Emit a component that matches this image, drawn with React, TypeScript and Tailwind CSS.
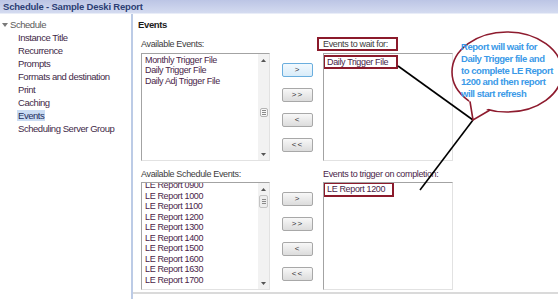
import React from "react";

const treeItems = [
  "Instance Title",
  "Recurrence",
  "Prompts",
  "Formats and destination",
  "Print",
  "Caching",
  "Events",
  "Scheduling Server Group",
];

const scheduleEvents = [
  "LE Report 0900",
  "LE Report 1000",
  "LE Report 1100",
  "LE Report 1200",
  "LE Report 1300",
  "LE Report 1400",
  "LE Report 1500",
  "LE Report 1600",
  "LE Report 1630",
  "LE Report 1700",
];

function Arrow({ up }: { up?: boolean }) {
  return (
    <div className="h-[12px] flex items-center justify-center">
      <svg width="5" height="3" viewBox="0 0 5 3">
        <path d={up ? "M0 3 L2.5 0 L5 3Z" : "M0 0 L2.5 3 L5 0Z"} fill="#555" />
      </svg>
    </div>
  );
}

function Grip() {
  return (
    <div className="w-[8px] h-[9px] border border-[#b4b4b4] rounded-[2px] bg-[#f8f8f8] flex flex-col items-center justify-center gap-[1px]">
      <div className="w-[4px] h-px bg-[#8a8a8a]" />
      <div className="w-[4px] h-px bg-[#8a8a8a]" />
      <div className="w-[4px] h-px bg-[#8a8a8a]" />
    </div>
  );
}

function ScrollBar({ thumb }: { thumb: "full" | "top" }) {
  return (
    <div className="w-[11px] bg-[#f2f2f2] flex flex-col">
      <Arrow up />
      <div className="flex-1 relative flex justify-center">
        {thumb === "top" ? (
          <div className="w-[9px] h-[13px] border border-[#c4c4c4] rounded-[2px] bg-[#ededed] flex items-center justify-center">
            <div className="flex flex-col gap-[1px]">
              <div className="w-[4px] h-px bg-[#8a8a8a]" />
              <div className="w-[4px] h-px bg-[#8a8a8a]" />
              <div className="w-[4px] h-px bg-[#8a8a8a]" />
            </div>
          </div>
        ) : (
          <div className="absolute top-[42px]">
            <Grip />
          </div>
        )}
      </div>
      <Arrow />
    </div>
  );
}

function ListBox({ children, scroll, width }: { children: React.ReactNode; scroll?: React.ReactNode; width: string }) {
  return (
    <div className={`${width} h-[108px] flex border border-[#a3a3a3] border-r-[#e2e2e2] border-b-[#e2e2e2] bg-white`}>
      <div className="flex-1 overflow-hidden">{children}</div>
      {scroll}
    </div>
  );
}

function MoveButtons({ focused }: { focused?: boolean }) {
  const base =
    "w-[31px] h-[14px] rounded-[2px] border flex items-center justify-center text-[8px] leading-none text-[#333] tracking-[1px]";
  const normal = "border-[#a8a8a8] bg-gradient-to-b from-[#f8f8f8] to-[#dcdcdc]";
  const focus = "border-[#6aaede] bg-gradient-to-b from-[#f2f9fe] to-[#d9ecf9]";
  return (
    <div className="flex flex-col gap-[11px]">
      <div className={`${base} ${focused ? focus : normal}`}>&gt;</div>
      <div className={`${base} ${normal}`}>&gt;&gt;</div>
      <div className={`${base} ${normal}`}>&lt;</div>
      <div className={`${base} ${normal}`}>&lt;&lt;</div>
    </div>
  );
}

export default function App() {
  return (
    <div className="w-[558px] h-[299px] relative overflow-hidden bg-white font-['Liberation_Sans',Arial,sans-serif] text-[9px] tracking-[-0.35px]">
      {/* title bar */}
      <div className="h-[14px] border-b border-[#e9edf8] bg-gradient-to-b from-[#bcc5e5] to-[#d4dbf0] pl-[3px] text-[9.5px] font-bold leading-[13px] text-[#2c3e74] tracking-[-0.2px]">
        Schedule - Sample Deski Report
      </div>

      <div className="flex h-[285px]">
        {/* left tree */}
        <div className="w-[133px] border-r-2 border-[#bccbe6] pt-[4px] leading-[13px] text-[9.5px] tracking-[-0.45px]">
          <div className="flex items-center pl-[2px] text-[#5a5a5a]">
            <svg width="6" height="4" viewBox="0 0 6 4" className="mr-[2px]">
              <path d="M0 0 L6 0 L3 4Z" fill="#7a7a7a" />
            </svg>
            Schedule
          </div>
          {treeItems.map((t) => (
            <div key={t} className="pl-[18px] text-[#3f2a48]">
              {t === "Events" ? (
                <span className="bg-[#cadcf3] text-[#1e2f5e] px-[1px] -ml-[1px]">{t}</span>
              ) : (
                t
              )}
            </div>
          ))}
        </div>

        {/* right pane */}
        <div className="flex-1 flex flex-col">
          <div className="pl-[5px] pt-[4px] leading-[13px] text-[9.5px] font-bold text-[#1b1b1b]">Events</div>
          <div className="pl-[8px] pb-[2px] border-b-2 border-[#dadada]">
            {/* row 1 */}
            <div className="flex mt-[7px]">
              <div className="w-[129px]">
                <div className="h-[12px] leading-[12px] text-[#3c3c3c]">Available Events:</div>
                <div className="mt-[3px]">
                  <ListBox width="w-[129px]" scroll={<ScrollBar thumb="full" />}>
                    <div className="pl-[3px] pt-[1px] leading-[10.4px] text-[#4a2548]">
                      <div>Monthly Trigger File</div>
                      <div>Daily Trigger File</div>
                      <div>Daily Adj Trigger File</div>
                    </div>
                  </ListBox>
                </div>
              </div>
              <div className="ml-[12px] w-[31px] pt-[25px]">
                <MoveButtons focused />
              </div>
              <div className="ml-[10px] w-[130px]">
                <div className="h-[12px] leading-[12px] text-[#3c3c3c]">
                  <span className="inline-block -ml-[6px] -mt-[1px] pl-[4px] pr-[8px] h-[14px] leading-[10px] border-2 border-[#8b1a2b]">
                    Events to wait for:
                  </span>
                </div>
                <div className="mt-[3px]">
                  <ListBox width="w-[130px]">
                    <div className="pt-[1px] -ml-[1px] leading-[10px] text-[#4a2548]">
                      <span className="inline-block h-[14px] pl-[2px] pr-[8px] border-2 border-[#8b1a2b]">Daily Trigger File</span>
                    </div>
                  </ListBox>
                </div>
              </div>
            </div>

            {/* row 2 */}
            <div className="flex mt-[7px]">
              <div className="w-[129px]">
                <div className="h-[12px] leading-[12px] text-[#3c3c3c]">Available Schedule Events:</div>
                <div className="mt-[2px]">
                  <ListBox width="w-[129px]" scroll={<ScrollBar thumb="top" />}>
                    <div className="pl-[3px] -mt-[3px] leading-[10.5px] text-[#4a2548]">
                      {scheduleEvents.map((e) => (
                        <div key={e}>{e}</div>
                      ))}
                    </div>
                  </ListBox>
                </div>
              </div>
              <div className="ml-[12px] w-[31px] pt-[24px]">
                <MoveButtons />
              </div>
              <div className="ml-[10px] w-[130px]">
                <div className="h-[12px] leading-[12px] text-[#4a2548]">Events to trigger on completion:</div>
                <div className="mt-[2px]">
                  <ListBox width="w-[130px]">
                    <div className="-mt-[1px] -ml-[1px] leading-[11px] text-[#4a2548]">
                      <span className="inline-block h-[15px] pl-[2px] pr-[7px] border-2 border-[#8b1a2b]">LE Report 1200</span>
                    </div>
                  </ListBox>
                </div>
              </div>
            </div>
          </div>
        </div>
      </div>

      {/* annotation overlay */}
      <svg className="absolute inset-0 pointer-events-none" width="558" height="299" viewBox="0 0 558 299">
        <line x1="398" y1="66" x2="473" y2="120" stroke="#000" strokeWidth="1.6" />
        <line x1="473" y1="120" x2="420" y2="190" stroke="#000" strokeWidth="1.6" />
        <ellipse cx="507" cy="72" rx="55" ry="40" fill="#fff" stroke="#8e1b2e" strokeWidth="1.6" />
        <polygon points="469,99 473,118 491,107" fill="#fff" />
        <polyline points="470,101.5 473,120 490,110" fill="none" stroke="#8e1b2e" strokeWidth="1.6" />
      </svg>
      <div className="absolute left-[461px] top-[41px] whitespace-nowrap text-[9.5px] font-bold leading-[11.75px] tracking-[-0.45px] text-[#3b9ae8]">
        <div>Report will wait for</div>
        <div>Daily Trigger file and</div>
        <div>to complete LE Report</div>
        <div>1200 and then report</div>
        <div>will start refresh</div>
      </div>
    </div>
  );
}
